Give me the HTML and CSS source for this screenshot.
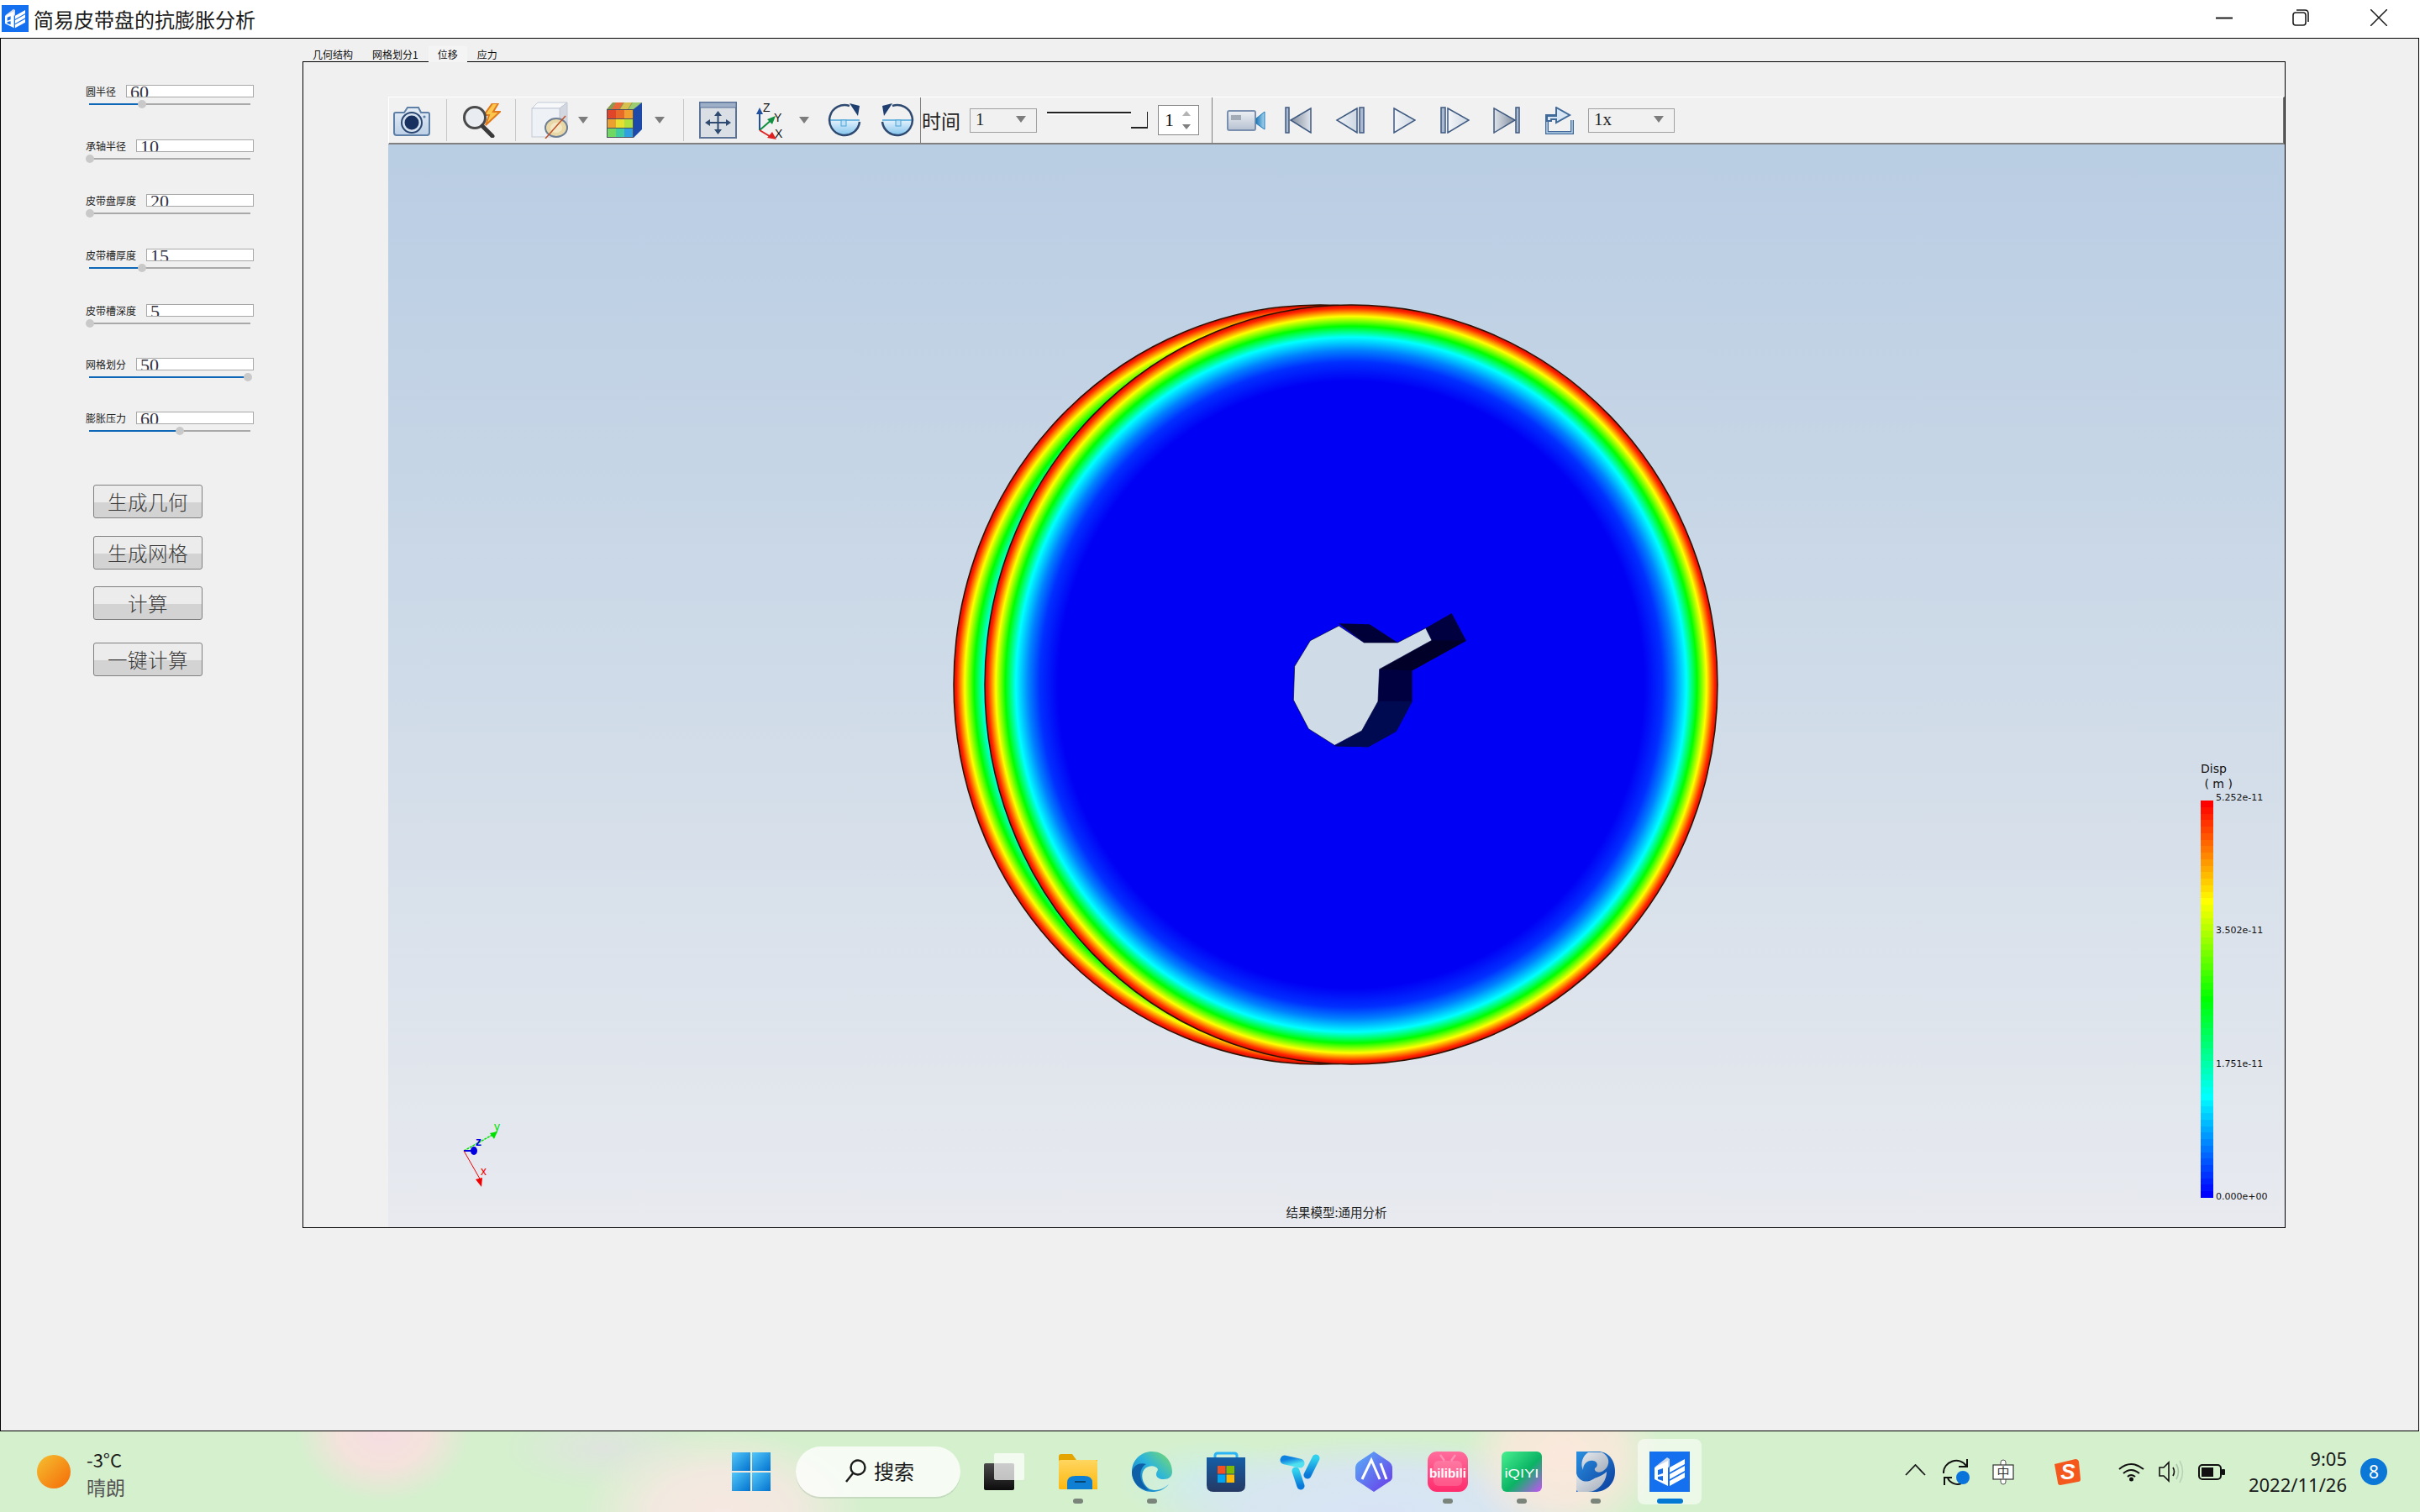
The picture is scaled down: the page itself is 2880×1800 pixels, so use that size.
FILE: index.html
```html
<!DOCTYPE html>
<html lang="zh">
<head>
<meta charset="utf-8">
<title>简易皮带盘的抗膨胀分析</title>
<link rel="stylesheet" href="styles.css">
</head>
<body>
<svg class="defs" width="0" height="0" aria-hidden="true">
  <defs>
    <radialGradient id="disc">
      <stop offset="0" stop-color="#0000f5"/><stop offset=".80" stop-color="#0000f5"/>
      <stop offset=".85" stop-color="#0030ff"/><stop offset=".88" stop-color="#0080ff"/>
      <stop offset=".915" stop-color="#00ffff"/><stop offset=".944" stop-color="#00ff00"/>
      <stop offset=".97" stop-color="#ffff00"/><stop offset=".992" stop-color="#ff2000"/><stop offset="1" stop-color="#d01000"/>
    </radialGradient>
    <linearGradient id="camBody" x1="0" y1="0" x2="0" y2="1"><stop offset="0" stop-color="#e6eef7"/><stop offset="1" stop-color="#bcd0e6"/></linearGradient>
    <linearGradient id="steel" x1="0" y1="0" x2="0" y2="1"><stop offset="0" stop-color="#eef1f5"/><stop offset="1" stop-color="#b5c0d0"/></linearGradient>
    <linearGradient id="darkTri" x1="1" y1="0" x2="0" y2="0"><stop offset="0" stop-color="#7f8b9d"/><stop offset="1" stop-color="#dfe4ea"/></linearGradient>
    <linearGradient id="darkTriR" x1="0" y1="0" x2="1" y2="0"><stop offset="0" stop-color="#7f8b9d"/><stop offset="1" stop-color="#dfe4ea"/></linearGradient>
    <linearGradient id="lightTri" x1="0" y1="0" x2="1" y2="0"><stop offset="0" stop-color="#f4f6f9"/><stop offset="1" stop-color="#ccd6e2"/></linearGradient>
    <linearGradient id="chord" x1="0" y1="0" x2="0" y2="1"><stop offset="0" stop-color="#e4f2fb"/><stop offset="1" stop-color="#82c4ee"/></linearGradient>
    <linearGradient id="lensBlue" x1="0" y1="0" x2="1" y2="0"><stop offset="0" stop-color="#1f78b8"/><stop offset="1" stop-color="#a8d8f0"/></linearGradient>
    <linearGradient id="pane" x1="0" y1="0" x2="1" y2="1"><stop offset="0" stop-color="#52c8fa"/><stop offset="1" stop-color="#0272cf"/></linearGradient>
    <linearGradient id="sun" x1="0" y1="0" x2="1" y2="1"><stop offset="0" stop-color="#f5c030"/><stop offset="1" stop-color="#f56a08"/></linearGradient>
    <linearGradient id="dark" x1="0" y1="0" x2="0" y2="1"><stop offset="0" stop-color="#4a4a4a"/><stop offset="1" stop-color="#0c0c0c"/></linearGradient>
    <linearGradient id="folder" x1="0" y1="0" x2="0" y2="1"><stop offset="0" stop-color="#ffd660"/><stop offset="1" stop-color="#fdb810"/></linearGradient>
    <linearGradient id="edge" x1="0" y1="1" x2="1" y2="0"><stop offset="0" stop-color="#0f6cc0"/><stop offset=".55" stop-color="#2cb5dc"/><stop offset="1" stop-color="#7edc62"/></linearGradient>
    <linearGradient id="bag" x1="0" y1="0" x2="0" y2="1"><stop offset="0" stop-color="#155ea6"/><stop offset="1" stop-color="#253963"/></linearGradient>
    <linearGradient id="vapp" x1="0" y1="0" x2="1" y2="1"><stop offset="0" stop-color="#0f82e0"/><stop offset="1" stop-color="#50e0f0"/></linearGradient>
    <linearGradient id="vapp2" x1="0" y1="0" x2="0" y2="1"><stop offset="0" stop-color="#30d0ee"/><stop offset="1" stop-color="#0a78d8"/></linearGradient>
    <linearGradient id="hex" x1="0" y1="0" x2="1" y2="1"><stop offset="0" stop-color="#58b0f8"/><stop offset="1" stop-color="#6a38e8"/></linearGradient>
    <linearGradient id="bili" x1="0" y1="0" x2="0" y2="1"><stop offset="0" stop-color="#ff6d9c"/><stop offset="1" stop-color="#ff2c6c"/></linearGradient>
    <linearGradient id="iqiyi" x1="0" y1="0" x2="1" y2="1"><stop offset="0" stop-color="#48f090"/><stop offset=".55" stop-color="#0ab464"/><stop offset="1" stop-color="#c850f8"/></linearGradient>
    <linearGradient id="swirl" x1="0" y1="0" x2="1" y2="1"><stop offset="0" stop-color="#e6e9ee"/><stop offset="1" stop-color="#a2adba"/></linearGradient>
    <linearGradient id="swirlB" x1="0" y1="0" x2="1" y2="1"><stop offset="0" stop-color="#2a90e0"/><stop offset="1" stop-color="#0a3c9c"/></linearGradient>
    <symbol id="appIcon" viewBox="0 0 48 48">
      <rect width="48" height="48" fill="#1570ef"/>
      <path d="M7 18 L21 7 L24 9 V17 L23 19Z" fill="#cdd9ea"/>
      <path d="M6 19 L22 11 V41 L6 33Z" fill="#fff"/>
      <path d="M10 22 l6 -2 v6 l-6 2z M10 30 l6 -1 v6 l-6 -2z" fill="#1570ef"/>
      <path d="M24 19 L42 9 V15 L24 25Z M24 27 L42 17 V23 L24 33Z M24 35 L42 25 V31 L24 41Z" fill="#fff"/>
    </symbol>
  </defs>
</svg>

<header class="titlebar">
  <svg class="app-icon" width="32" height="32"><use href="#appIcon"/></svg>
  <span class="app-title">简易皮带盘的抗膨胀分析</span>
  <div class="win-controls">
    <svg class="wc-min" width="20" height="3" viewBox="0 0 20 3"><path d="M0 1.5H20" stroke="#1c1c1c" stroke-width="2"/></svg>
    <svg class="wc-max" width="20" height="20" viewBox="0 0 20 20" fill="none" stroke="#1c1c1c" stroke-width="1.6"><rect x="1" y="4" width="15" height="15" rx="3"/><path d="M5 1H15Q19 1 19 5V15"/></svg>
    <svg class="wc-close" width="20" height="20" viewBox="0 0 20 20"><path d="M0 0L20 20M20 0L0 20" stroke="#1c1c1c" stroke-width="1.5"/></svg>
  </div>
</header>

<main class="window">
  <aside class="sidebar">
    <div class="param">
      <div class="param-head"><label>圆半径</label><div class="num">60</div></div>
      <div class="track"><i class="fill" style="width:63px"></i><b class="thumb" style="left:63px"></b></div>
    </div>
    <div class="param">
      <div class="param-head"><label>承轴半径</label><div class="num">10</div></div>
      <div class="track"><b class="thumb" style="left:1px"></b></div>
    </div>
    <div class="param">
      <div class="param-head"><label>皮带盘厚度</label><div class="num">20</div></div>
      <div class="track"><b class="thumb" style="left:1px"></b></div>
    </div>
    <div class="param">
      <div class="param-head"><label>皮带槽厚度</label><div class="num">15</div></div>
      <div class="track"><i class="fill" style="width:63px"></i><b class="thumb" style="left:63px"></b></div>
    </div>
    <div class="param nudge-down">
      <div class="param-head"><label>皮带槽深度</label><div class="num">5</div></div>
      <div class="track"><b class="thumb" style="left:1px"></b></div>
    </div>
    <div class="param nudge-up">
      <div class="param-head"><label>网格划分</label><div class="num">50</div></div>
      <div class="track"><i class="fill" style="width:189px"></i><b class="thumb" style="left:189px"></b></div>
    </div>
    <div class="param nudge-up">
      <div class="param-head"><label>膨胀压力</label><div class="num">60</div></div>
      <div class="track"><i class="fill" style="width:108px"></i><b class="thumb" style="left:108px"></b></div>
    </div>
    <div class="actions">
      <button class="btn">生成几何</button>
      <button class="btn btn-2">生成网格</button>
      <button class="btn btn-3">计算</button>
      <button class="btn btn-4">一键计算</button>
    </div>
  </aside>

  <section class="main">
    <nav class="tabs">
      <span class="tab">几何结构</span>
      <span class="tab">网格划分1</span>
      <span class="tab tab-active">位移</span>
      <span class="tab">应力</span>
    </nav>
    <div class="panel">
      <div class="toolbar">
        <svg class="t-cam" width="44" height="37" viewBox="0 0 44 37"><path d="M3 9H13L17 3H30L33 9H41Q43 9 43 11V33Q43 36 40 36H4Q1 36 1 33V11Q1 9 3 9Z" fill="url(#camBody)" stroke="#5e7fa6" stroke-width="2"/><circle cx="22" cy="21" r="12" fill="#d8e3f0" stroke="#2a4673" stroke-width="2"/><circle cx="22" cy="21" r="8.5" fill="#17305f"/><circle cx="37" cy="14" r="1.6" fill="#5e7fa6"/></svg>
        <i class="sep s-1"></i>
        <svg class="t-mag" width="47" height="41" viewBox="0 0 47 41"><path d="M37 0L27 14H33L29 26L46 10H38L44 0Z" fill="#fbc64e" stroke="#e07a1c" stroke-width="2"/><circle cx="16" cy="17" r="12.5" fill="#e9edf1" stroke="#4a4a4a" stroke-width="3"/><path d="M25 27L37 39" stroke="#3a3a3a" stroke-width="5" stroke-linecap="round"/></svg>
        <i class="sep s-2"></i>
        <svg class="t-box" width="45" height="44" viewBox="0 0 45 44"><path d="M1 8L8 1H43L34 8Z" fill="#f7f8fa" stroke="#c3cad6"/><path d="M34 8L43 1V34L34 42Z" fill="#d3d8e0" stroke="#c3cad6"/><rect x="1" y="8" width="33" height="34" fill="#eef1f5" stroke="#c3cad6"/><ellipse cx="30" cy="31" rx="13" ry="11" fill="#e8d8a8" stroke="#6e7e94" stroke-width="2"/><ellipse cx="30" cy="31" rx="7" ry="6" fill="#f3e8c6"/><path d="M17 44L41 17" stroke="#c0502a" stroke-width="1.5"/></svg>
        <svg class="t-arrow a-1" width="12" height="8" viewBox="0 0 12 8"><path d="M0 0H12L6 8Z" fill="#7c7c7c"/></svg>
        <svg class="t-cube" width="44" height="44" viewBox="0 0 44 44"><path d="M1 9L8 1H43L33 9Z" fill="#8a9a50"/><path d="M12 1H21L16 9H7Z" fill="#e86a3a"/><path d="M22 1H31L26 9H17Z" fill="#d8c050"/><path d="M32 1H42L33 9H27Z" fill="#9ccc70"/><path d="M33 9L43 1V33L33 43Z" fill="#1d4aa8"/><path d="M1 9H33V43H1Z" fill="#4a5060"/><rect x="2" y="10" width="10" height="10" fill="#e0452a"/><rect x="12" y="10" width="10" height="10" fill="#e86a28"/><rect x="22" y="10" width="10" height="10" fill="#f0a030"/><rect x="2" y="21" width="10" height="10" fill="#eca030"/><rect x="12" y="21" width="10" height="10" fill="#e8e030"/><rect x="22" y="21" width="10" height="10" fill="#b0e040"/><rect x="2" y="32" width="10" height="10" fill="#70d860"/><rect x="12" y="32" width="10" height="10" fill="#40cca0"/><rect x="22" y="32" width="10" height="10" fill="#30a0e0"/></svg>
        <svg class="t-arrow a-2" width="12" height="8" viewBox="0 0 12 8"><path d="M0 0H12L6 8Z" fill="#7c7c7c"/></svg>
        <i class="sep s-3"></i>
        <svg class="t-fit" width="45" height="44" viewBox="0 0 45 44"><rect x="1" y="1" width="43" height="42" fill="#dadee5" stroke="#5a7397" stroke-width="2"/><rect x="1" y="1" width="43" height="6" fill="#9db0c8" stroke="#5a7397"/><path d="M22.5 15V35M11 25H34" stroke="#2f4a70" stroke-width="2"/><path d="M22.5 11L18 17H27ZM22.5 39L18 33H27ZM7 25L13 21V29ZM38 25L32 21V29Z" fill="#2f4a70"/></svg>
        <svg class="t-triad" width="35" height="45" viewBox="0 0 35 45"><path d="M4 34V12" stroke="#2050a0" stroke-width="2"/><path d="M4 7L0 15H8Z" fill="#2050a0"/><path d="M4 34L19 21" stroke="#109040" stroke-width="2"/><path d="M23 17L13 21L19 27Z" fill="#109040"/><path d="M4 34L19 43" stroke="#e02020" stroke-width="2"/><path d="M24 45L13 43L19 36Z" fill="#e02020"/><text x="8" y="12" class="triad-label">Z</text><text x="21" y="24" class="triad-label">Y</text><text x="22" y="43" class="triad-label">X</text></svg>
        <svg class="t-arrow a-3" width="12" height="8" viewBox="0 0 12 8"><path d="M0 0H12L6 8Z" fill="#7c7c7c"/></svg>
        <svg class="t-rot1" width="41" height="40" viewBox="0 0 41 40"><path d="M2 20H38A18 18 0 0 1 2 20Z" fill="url(#chord)"/><path d="M2 20H38" stroke="#4aa3d8" stroke-width="1.5"/><rect x="16" y="20" width="6" height="7" fill="#bfe0f5" stroke="#4aa3d8"/><path d="M26 3A18 18 0 1 0 38 22" fill="none" stroke="#2f4a70" stroke-width="2.5"/><path d="M26 0L38 3L36 15Z" fill="#1f3f70"/></svg>
        <svg class="t-rot2" width="40" height="40" viewBox="0 0 40 40"><g transform="translate(40,0) scale(-1,1)"><path d="M2 20H38A18 18 0 0 1 2 20Z" fill="url(#chord)"/><path d="M2 20H38" stroke="#4aa3d8" stroke-width="1.5"/><rect x="16" y="20" width="6" height="7" fill="#bfe0f5" stroke="#4aa3d8"/><path d="M26 3A18 18 0 1 0 38 22" fill="none" stroke="#2f4a70" stroke-width="2.5"/><path d="M26 0L38 3L36 15Z" fill="#1f3f70"/></g></svg>
        <i class="sep sep-full s-4"></i>
        <span class="t-time">时间</span>
        <div class="combo c-time"><span>1</span><svg width="12" height="8" viewBox="0 0 12 8"><path d="M0 0H12L6 8Z" fill="#7c7c7c"/></svg></div>
        <svg class="t-slider" width="120" height="24" viewBox="0 0 120 24"><path d="M0 3H100" stroke="#222" stroke-width="2"/><path d="M0 5H100" stroke="#fff" stroke-width="2"/><path d="M100 21H120V2" fill="none" stroke="#222" stroke-width="2"/></svg>
        <div class="spin"><span>1</span><svg width="10" height="22" viewBox="0 0 10 22"><path d="M5 0L10 6H0Z" fill="#b4b4b4"/><path d="M0 16H10L5 22Z" fill="#808080"/></svg></div>
        <i class="sep sep-full s-5"></i>
        <svg class="t-video" width="46" height="25" viewBox="0 0 46 25"><rect x="1" y="1" width="33" height="23" rx="2" fill="url(#steel)" stroke="#7b8fae" stroke-width="2"/><rect x="5" y="6" width="12" height="6" fill="#a3abb7"/><path d="M35 10L45 2V23L35 16Z" fill="url(#lensBlue)" stroke="#1f78b8"/></svg>
        <svg class="t-first" width="32" height="32" viewBox="0 0 32 32"><rect x="1" y="1" width="4" height="30" fill="#a9b9cf" stroke="#3f5a80" stroke-width="1.5"/><path d="M31 2L7 16L31 31Z" fill="url(#darkTriR)" stroke="#3f5a80" stroke-width="1.5"/></svg>
        <svg class="t-prev" width="36" height="32" viewBox="0 0 36 32"><path d="M26 2L2 16L26 31Z" fill="url(#lightTri)" stroke="#3f5a80" stroke-width="1.5"/><rect x="29" y="1" width="5" height="30" fill="#a9b9cf" stroke="#3f5a80" stroke-width="1.5"/></svg>
        <svg class="t-play" width="27" height="32" viewBox="0 0 27 32"><path d="M1 2L26 16L1 31Z" fill="url(#lightTri)" stroke="#3f5a80" stroke-width="1.5"/></svg>
        <svg class="t-next" width="35" height="32" viewBox="0 0 35 32"><rect x="1" y="1" width="5" height="30" fill="#a9b9cf" stroke="#3f5a80" stroke-width="1.5"/><path d="M9 2L34 16L9 31Z" fill="url(#lightTri)" stroke="#3f5a80" stroke-width="1.5"/></svg>
        <svg class="t-last" width="33" height="32" viewBox="0 0 33 32"><path d="M1 2L26 16L1 31Z" fill="url(#darkTri)" stroke="#3f5a80" stroke-width="1.5"/><rect x="27" y="1" width="4" height="30" fill="#a9b9cf" stroke="#3f5a80" stroke-width="1.5"/></svg>
        <svg class="t-export" width="36" height="33" viewBox="0 0 36 33"><path d="M13 11H3V31H33V16" fill="none" stroke="#3f6a9a" stroke-width="4"/><path d="M13 11H3V31H33V16" fill="none" stroke="#bcd4ec" stroke-width="1.5"/><path d="M3 17V11H14V7L14 1L30 10L14 19V15H8V17Z" fill="#d8e6f4" stroke="#3f6a9a" stroke-width="2"/></svg>
        <div class="combo c-speed"><span>1x</span><svg width="12" height="8" viewBox="0 0 12 8"><path d="M0 0H12L6 8Z" fill="#7c7c7c"/></svg></div>
      </div>

      <div class="viewport">
        <svg class="scene" width="2256" height="1289" viewBox="462 172 2256 1289">
          <ellipse cx="1571" cy="815" rx="436" ry="452" fill="url(#disc)" stroke="#301000" stroke-width="1.5"/>
          <ellipse cx="1608" cy="815" rx="436" ry="452" fill="url(#disc)" stroke="#301000" stroke-width="1.5"/>
          <g transform="translate(1480,680) scale(.3333)">
            <path d="M340 187L450 190L550 255H430Z" fill="#000038"/>
            <path d="M650 203L743 150L795 248L602 355V465L545 572L445 628L325 625L422 570L480 465L485 350L672 247Z" fill="#000040"/>
            <path d="M485 350L672 247L795 248L602 355Z" fill="#000028"/>
            <path d="M480 465L602 465L545 572L445 628L325 625L422 570Z" fill="#000a50"/>
            <path d="M340 195L430 255H550L650 203L672 247L485 350L480 465L422 570L325 622L232 563L178 460L182 340L238 248Z" fill="#cfdce8" stroke="#000030" stroke-width="2"/>
          </g>
          <g class="triad">
            <path d="M552 1370L588 1350" stroke="#00e000" stroke-width="1.5" stroke-dasharray="3 1"/>
            <path d="M592 1347L583 1349L588 1356Z" fill="#00e000"/>
            <text x="588" y="1346" class="axis axis-y">y</text>
            <path d="M552 1370H562" stroke="#0000e0" stroke-width="2"/>
            <ellipse cx="564" cy="1370" rx="4" ry="5" fill="#0000e0"/>
            <text x="566" y="1364" class="axis axis-z">z</text>
            <path d="M552 1370L572 1405" stroke="#f00000"/>
            <path d="M573 1413L566 1404L574 1402Z" fill="#f00000"/>
            <text x="572" y="1399" class="axis axis-x">x</text>
          </g>
        </svg>
        <div class="legend">
          <div class="legend-title">Disp<br>&nbsp;( m )</div>
          <div class="legend-body">
            <div class="legend-bar"></div>
            <div class="legend-labels"><span>5.252e-11</span><span>3.502e-11</span><span>1.751e-11</span><span>0.000e+00</span></div>
          </div>
        </div>
        <div class="caption">结果模型:通用分析</div>
      </div>
    </div>
  </section>
</main>

<footer class="taskbar">
  <div class="weather">
    <svg width="40" height="40" viewBox="0 0 40 40"><circle cx="20" cy="20" r="20" fill="url(#sun)"/></svg>
    <div class="weather-text"><span>-3°C</span><span class="weather-sub">晴朗</span></div>
  </div>
  <div class="cell">
    <svg width="46" height="46" viewBox="0 0 46 46"><rect width="22" height="22" fill="url(#pane)"/><rect x="24" width="22" height="22" fill="url(#pane)"/><rect y="24" width="22" height="22" fill="url(#pane)"/><rect x="24" y="24" width="22" height="22" fill="url(#pane)"/></svg>
  </div>
  <div class="search">
    <svg width="28" height="28" viewBox="0 0 28 28" fill="none" stroke="#1a1a1a" stroke-width="2.4"><circle cx="17" cy="10" r="8.5"/><path d="M11 17L3 27"/></svg>
    <span>搜索</span>
  </div>
  <div class="cell cell-first">
    <svg width="48" height="44" viewBox="0 0 48 44"><rect y="12" width="36" height="32" rx="2" fill="url(#dark)"/><rect x="12" width="36" height="32" rx="2" fill="#fff" fill-opacity=".72"/></svg>
  </div>
  <div class="cell run">
    <svg width="46" height="42" viewBox="0 0 46 42"><path d="M0 3Q0 0 3 0H16L21 7H46V42H3Q0 42 0 39Z" fill="#e5a500"/><rect y="7" width="46" height="35" rx="2" fill="url(#folder)"/><path d="M10 42V34Q10 26 20 26H30Q40 26 40 34V42Z" fill="#0e7fd2"/><rect x="19" y="32" width="13" height="2" fill="#06456f"/></svg>
  </div>
  <div class="cell run">
    <svg width="48" height="48" viewBox="0 0 48 48"><path d="M24 48C10 48 0 37 0 24C0 10 11 0 24 0C38 0 48 11 48 24C48 30 44 33 38 33C33 33 29 31 29 27C29 24 31 23 31 21C28 16 20 16 15 21C10 27 12 38 20 44C28 48 36 46 44 39C38 46 31 48 24 48Z" fill="url(#edge)"/><path d="M0 24C3 15 10 13 17 15C8 20 7 35 20 46C8 45 0 35 0 24Z" fill="#0f5ea8"/></svg>
  </div>
  <div class="cell">
    <svg width="46" height="48" viewBox="0 0 46 48"><path d="M10 12V5Q10 2 13 2H33Q36 2 36 5V12" fill="none" stroke="#28b4f5" stroke-width="3"/><path d="M0 7H46V40Q46 48 38 48H8Q0 48 0 40Z" fill="url(#bag)"/><rect x="13" y="17" width="9.500" height="9.500" fill="#f25022"/><rect x="23.500" y="17" width="9.500" height="9.500" fill="#7fba00"/><rect x="13" y="27.500" width="9.500" height="9.500" fill="#00a4ef"/><rect x="23.500" y="27.500" width="9.500" height="9.500" fill="#ffb900"/></svg>
  </div>
  <div class="cell">
    <svg width="48" height="44" viewBox="0 0 48 44"><path d="M6 8L24 12" stroke="url(#vapp)" stroke-width="11" stroke-linecap="round"/><path d="M43 6L33 26" stroke="url(#vapp2)" stroke-width="9" stroke-linecap="round"/><path d="M19 21L25 39" stroke="url(#vapp2)" stroke-width="9" stroke-linecap="round"/></svg>
  </div>
  <div class="cell">
    <svg width="44" height="48" viewBox="0 0 44 48"><path d="M22 0L40 12Q44 15 44 20V30Q44 34 40 36L22 48L4 36Q0 34 0 30V20Q0 15 4 12Z" fill="url(#hex)"/><path d="M8 33L19 10L29 33M30 14L37 33" fill="none" stroke="#fff" stroke-width="3"/></svg>
  </div>
  <div class="cell run">
    <svg width="48" height="48" viewBox="0 0 48 48"><rect width="48" height="48" rx="11" fill="url(#bili)"/><path d="M15 4L20 11M33 4L28 11" stroke="#ff8fb4" stroke-width="2.500"/><rect x="7" y="11" width="34" height="30" rx="6" fill="#fff" fill-opacity=".16"/><text x="24" y="31" class="ico-text bili-text" textLength="44" lengthAdjust="spacingAndGlyphs">bilibili</text></svg>
  </div>
  <div class="cell run">
    <svg width="48" height="48" viewBox="0 0 48 48"><rect width="48" height="48" rx="6" fill="url(#iqiyi)"/><text x="24" y="31" class="ico-text iqiyi-text" textLength="41" lengthAdjust="spacingAndGlyphs">iQIYI</text></svg>
  </div>
  <div class="cell run">
    <svg width="46" height="48" viewBox="0 0 46 48"><path d="M0 0H26C38 0 46 10 46 24C46 38 36 48 22 48H0Z" fill="url(#swirlB)"/><path d="M14 1H30C42 6 40 20 30 24C25 26 21 23 22 20C26 18 26 12 20 11C14 10 8 14 8 22C4 14 8 5 14 1Z" fill="url(#swirl)"/><path d="M0 26C2 34 10 38 18 34C24 30 30 30 36 24C36 36 26 48 14 48H2L0 46Z" fill="url(#swirl)"/></svg>
  </div>
  <div class="cell cell-active">
    <svg width="48" height="48"><use href="#appIcon"/></svg>
  </div>
  <div class="tray">
    <svg class="tr-chev" width="25" height="14" viewBox="0 0 25 14"><path d="M1 13L12.500 1L24 13" fill="none" stroke="#1a1a1a" stroke-width="1.8"/></svg>
    <svg class="tr-sync" width="32" height="32" viewBox="0 0 32 32" fill="none" stroke="#111" stroke-width="2"><path d="M1 18C0 4 20 -3 28 9"/><path d="M29 1V10H19"/><path d="M6 24C10 31 18 32 22 30"/><path d="M2 32V23H11"/><circle cx="24" cy="23" r="8" fill="#0a74da" stroke="none"/></svg>
    <svg class="tr-ime" width="26" height="31" viewBox="0 0 26 31"><rect x="10" y="1" width="6" height="29" rx="3" fill="#fff" stroke="#555"/><rect x="1" y="7" width="24" height="17" fill="#fff" stroke="#333" stroke-width="1.200"/><text x="13" y="21" class="ime-text">中</text></svg>
    <svg class="tr-sogou" width="32" height="31" viewBox="0 0 32 31"><path d="M1 6L26 0Q29 0 30 3L32 24Q32 27 29 27L8 31Q5 31 5 28Z" fill="#f4581c"/><text x="17" y="24" class="sogou-text">S</text></svg>
    <svg class="tr-wifi" width="31" height="24" viewBox="0 0 31 24" fill="none" stroke="#111" stroke-width="2"><path d="M1 9Q15 -3 30 9"/><path d="M6 14Q15 6 25 14"/><path d="M11 18Q15 14 20 18"/><circle cx="15.500" cy="21" r="2.500" fill="#111" stroke="none"/></svg>
    <svg class="tr-vol" width="30" height="28" viewBox="0 0 30 28" fill="none" stroke="#111" stroke-width="1.600"><path d="M1 9H6L12 3V25L6 19H1Z"/><path d="M17 9Q20 14 17 19"/><path d="M21 5Q26 14 21 23" stroke="#a9c4a8"/><path d="M25 1Q32 14 25 27" stroke="#b9d3b6"/></svg>
    <svg class="tr-bat" width="32" height="19" viewBox="0 0 32 19"><rect x="1" y="1" width="26" height="17" rx="4" fill="none" stroke="#111" stroke-width="2"/><rect x="4" y="4" width="14" height="11" fill="#111"/><rect x="28" y="6" width="4" height="7" rx="1" fill="#111"/></svg>
    <div class="clock"><span>9:05</span><span>2022/11/26</span></div>
    <div class="badge">8</div>
  </div>
</footer>
</body>
</html>
```
FILE: styles.css
```css
* { box-sizing: border-box; }
html, body { margin: 0; padding: 0; }
body {
  width: 2880px;
  height: 1800px;
  overflow: hidden;
  background: #fff;
  display: flex;
  flex-direction: column;
  font-family: "Noto Sans CJK SC", "Noto Sans", sans-serif;
  color: #111;
}
.defs { position: absolute; }
svg { display: block; flex: none; }

/* title bar */
.titlebar { height: 45px; flex: none; display: flex; align-items: center; padding: 0 0 3px 2px; }
.app-icon { margin-top: 1px; }
.app-title { margin-left: 6px; padding-top: 4px; font-size: 24px; line-height: 32px; color: #1a1a1a; white-space: nowrap; }
.win-controls { margin-left: auto; display: flex; align-items: center; padding-right: 39px; }
.wc-max { margin-left: 71px; }
.wc-close { margin-left: 73px; }

/* window */
.window {
  width: 2879px;
  height: 1659px;
  flex: none;
  border: 1px solid #000;
  background: #f0f0f0;
  display: flex;
}
.sidebar { width: 359px; flex: none; padding: 55px 0 0 101px; }
.param { width: 200px; height: 65px; display: flex; flex-direction: column; }
.nudge-down { margin-top: 1px; }
.nudge-up { margin-top: -1px; }
.param-head { display: flex; align-items: center; gap: 12px; height: 15px; }
.param-head label { font-size: 12px; line-height: 15px; color: #222; white-space: nowrap; }
.num {
  flex: 1;
  height: 15px;
  background: #fff;
  border: 1px solid #a8a8a8;
  overflow: hidden;
  padding-left: 4px;
  font-family: "Liberation Serif", serif;
  font-size: 22px;
  line-height: 15px;
  color: #334;
}
.track { position: relative; width: 192px; height: 2px; margin: 7px 0 0 4px; background: #a9a9a9; }
.fill { display: block; height: 2px; background: #0f67b8; }
.thumb {
  position: absolute;
  top: -4px;
  width: 10px;
  height: 10px;
  margin-left: -5px;
  border-radius: 50%;
  background: #c9c9c9;
}
.actions { display: flex; flex-direction: column; align-items: flex-start; margin: 22px 0 0 9px; }
.btn {
  width: 130px;
  height: 40px;
  padding: 0;
  border: 1px solid #808080;
  border-radius: 3px;
  background: linear-gradient(#ececec 0 52%, #d3d3d3 52% 100%);
  font-family: "Noto Sans CJK SC", sans-serif;
  font-weight: 300;
  font-size: 23.500px;
  line-height: 36px;
  color: #3a3a3a;
  letter-spacing: .5px;
}
.btn-2 { margin-top: 21px; }
.btn-3 { margin-top: 20px; }
.btn-4 { margin-top: 27px; }

/* tabs and panel */
.main { flex: none; width: 2360px; padding-top: 9px; display: flex; flex-direction: column; }
.tabs { display: flex; gap: 1px; height: 18px; padding-left: 1px; flex: none; position: relative; z-index: 1; }
.tab { padding: 0 11px; font-size: 12px; line-height: 20px; color: #111; white-space: nowrap; }
.tab-active { height: 19px; background: #f4f4f4; }
.panel {
  width: 2360px;
  height: 1389px;
  flex: none;
  border: 1px solid #000;
  padding: 41px 0 0 101px;
  display: flex;
  flex-direction: column;
}
.toolbar {
  height: 57px;
  flex: none;
  background: #f1f1f1;
  border-top: 1px solid #fff;
  border-left: 1px solid #fff;
  border-bottom: 2px solid #808080;
  border-right: 2px solid #707070;
  display: flex;
  align-items: center;
}
.t-cam { margin-left: 5px; }
.sep { width: 1px; height: 50px; background: #c8c8c8; flex: none; }
.sep-full { height: 54px; background: #808080; }
.s-1 { margin-left: 19px; }
.t-mag { margin-left: 17px; }
.s-2 { margin-left: 17px; }
.t-box { margin-left: 18px; }
.a-1 { margin-left: 11px; }
.t-cube { margin-left: 21px; }
.a-2 { margin-left: 14px; }
.s-3 { margin-left: 22px; }
.t-fit { margin-left: 18px; }
.t-triad { margin-left: 23px; }
.triad-label { font-family: "Liberation Sans", sans-serif; font-size: 14px; fill: #111; }
.a-3 { margin-left: 16px; }
.t-rot1 { margin-left: 22px; }
.t-rot2 { margin-left: 22px; }
.s-4 { margin-left: 7px; }
.t-time { margin-left: 1px; width: 46px; font-size: 23px; line-height: 30px; color: #222; white-space: nowrap; }
.combo {
  height: 29px;
  border: 1px solid #a0a0a0;
  display: flex;
  align-items: center;
  justify-content: space-between;
  padding: 0 12px 2px 6px;
  font-family: "Liberation Serif", serif;
  font-size: 21px;
  color: #222;
}
.c-time { width: 80px; margin-left: 11px; }
.t-slider { margin-left: 12px; }
.spin {
  width: 49px;
  height: 36px;
  margin-left: 12px;
  background: #fff;
  border: 1px solid #888;
  display: flex;
  align-items: center;
  justify-content: space-between;
  padding: 0 9px 0 7px;
  font-family: "Liberation Serif", serif;
  font-size: 22px;
}
.s-5 { margin-left: 15px; }
.t-video { margin-left: 17px; }
.t-first { margin-left: 23px; }
.t-prev { margin-left: 28px; }
.t-play { margin-left: 33px; }
.t-next { margin-left: 29px; }
.t-last { margin-left: 28px; }
.t-export { margin-left: 28px; }
.c-speed { width: 103px; margin-left: 16px; }

/* 3D viewport */
.viewport {
  position: relative;
  flex: 1;
  overflow: hidden;
  background: linear-gradient(#b9cde3 0%, #cfdbe8 50%, #e8eaef 100%);
}
.scene { position: absolute; left: 0; top: 0; }
.axis { font-family: "Liberation Sans", sans-serif; font-size: 14px; }
.axis-y { fill: #00e000; }
.axis-z { fill: #0000e0; font-weight: 700; }
.axis-x { fill: #f00000; }
.legend { position: absolute; left: 2157px; top: 734px; font-family: "DejaVu Sans", sans-serif; color: #111; }
.legend-title { font-size: 14px; line-height: 18px; height: 47px; }
.legend-body { display: flex; gap: 3px; }
.legend-bar {
  width: 15px;
  height: 61em;
  font-size: 7.754px;
  background: linear-gradient(#f00 1em,#f10 0 2em,#f20 0 3em,#f30 0 4em,#f40 0 5em,#f50 0 6em,#f60 0 7em,#f70 0 8em,#f80 0 9em,#f90 0 10em,#fa0 0 11em,#fb0 0 12em,#fc0 0 13em,#fd0 0 14em,#fe0 0 15em,#ff0 0 16em,#ef0 0 17em,#df0 0 18em,#cf0 0 19em,#bf0 0 20em,#af0 0 21em,#9f0 0 22em,#8f0 0 23em,#7f0 0 24em,#6f0 0 25em,#5f0 0 26em,#4f0 0 27em,#3f0 0 28em,#2f0 0 29em,#1f0 0 30em,#0f0 0 31em,#0f1 0 32em,#0f2 0 33em,#0f3 0 34em,#0f4 0 35em,#0f5 0 36em,#0f6 0 37em,#0f7 0 38em,#0f8 0 39em,#0f9 0 40em,#0fa 0 41em,#0fb 0 42em,#0fc 0 43em,#0fd 0 44em,#0fe 0 45em,#0ff 0 46em,#0ef 0 47em,#0df 0 48em,#0cf 0 49em,#0bf 0 50em,#0af 0 51em,#09f 0 52em,#08f 0 53em,#07f 0 54em,#06f 0 55em,#05f 0 56em,#04f 0 57em,#03f 0 58em,#02f 0 59em,#01f 0 60em,#00f 0 61em);
}
.legend-labels {
  height: 489px;
  margin-top: -10px;
  display: flex;
  flex-direction: column;
  justify-content: space-between;
  font-size: 11px;
  line-height: 14px;
  white-space: nowrap;
}
.caption { position: absolute; left: 0; right: 0; bottom: 9px; text-align: center; font-size: 14.500px; line-height: 18px; color: #222; }

/* taskbar */
.taskbar {
  height: 96px;
  flex: none;
  display: flex;
  align-items: center;
  background:
    radial-gradient(ellipse 105px 85px at 456px 0, #f6dde2 0, #f4e2dc 50%, rgba(245,230,210,0) 100%),
    radial-gradient(ellipse 170px 100px at 860px 96px, #f6e8e2 0, rgba(246,232,226,.85) 50%, rgba(246,232,226,0) 100%),
    radial-gradient(ellipse 120px 50px at 720px 20px, #dfe4de 0, rgba(223,228,222,0) 100%),
    radial-gradient(ellipse 120px 100px at 1860px 30px, #fbe8dc 0, rgba(251,232,220,.8) 55%, rgba(251,232,220,0) 100%),
    radial-gradient(ellipse 280px 90px at 1640px 96px, #d8e4f6 0, rgba(216,228,246,.85) 55%, rgba(216,228,246,0) 100%),
    radial-gradient(ellipse 110px 50px at 1440px 60px, #cdeeea 0, rgba(205,238,234,0) 100%),
    #d4f0cd;
}
.weather { width: 850px; flex: none; padding-left: 44px; display: flex; align-items: center; gap: 19px; }
.weather-text { display: flex; flex-direction: column; font-size: 22px; line-height: 33px; color: #1a1a1a; padding-top: 3px; }
.weather-sub { font-size: 23px; color: #555; }
.cell { position: relative; width: 88px; height: 96px; flex: none; display: flex; align-items: center; justify-content: center; }
.cell-first { margin-left: 8px; }
.run::after {
  content: "";
  position: absolute;
  left: 38px;
  top: 80px;
  width: 12px;
  height: 6px;
  border-radius: 3px;
  background: #7b847b;
}
.cell-active svg { position: relative; }
.cell-active::before {
  content: "";
  position: absolute;
  left: 6px;
  top: 9px;
  width: 76px;
  height: 78px;
  border-radius: 8px;
  background: rgba(255,255,255,.55);
}
.cell-active::after {
  content: "";
  position: absolute;
  left: 29px;
  top: 80px;
  width: 31px;
  height: 6px;
  border-radius: 3px;
  background: #0078d4;
}
.search {
  width: 196px;
  height: 60px;
  margin: 0 0 0 9px;
  flex: none;
  border-radius: 30px;
  background: rgba(255,255,255,.78);
  box-shadow: 0 2px 0 rgba(180,200,175,.5);
  display: flex;
  align-items: center;
  justify-content: center;
  gap: 8px;
  font-size: 24px;
  line-height: 32px;
  color: #1a1a1a;
  padding: 0 0 2px 2px;
}
.ico-text { font-family: "Liberation Sans", sans-serif; font-weight: 700; fill: #fff; text-anchor: middle; }
.bili-text { font-size: 15px; }
.iqiyi-text { font-size: 15px; font-weight: 400; }
.tray { display: flex; align-items: center; margin-left: 236px; }
.tr-chev { margin-top: -4px; }
.tr-sync { margin-left: 20px; }
.tr-ime { margin-left: 27px; }
.ime-text { font-size: 15px; text-anchor: middle; fill: #333; }
.tr-sogou { margin-left: 47px; }
.sogou-text { font-family: "Liberation Sans", sans-serif; font-weight: 700; font-style: italic; font-size: 26px; text-anchor: middle; fill: #fff; }
.tr-wifi { margin-left: 45px; }
.tr-vol { margin-left: 17px; }
.tr-bat { margin-left: 17px; }
.clock {
  width: 125px;
  margin-left: 20px;
  display: flex;
  flex-direction: column;
  align-items: flex-end;
  font-family: "Noto Sans", sans-serif;
  font-size: 22px;
  line-height: 31px;
  color: #1a1a1a;
  white-space: nowrap;
}
.badge {
  width: 32px;
  height: 32px;
  margin-left: 16px;
  border-radius: 50%;
  background: #0b78d7;
  color: #fff;
  font-family: "Noto Sans", sans-serif;
  font-size: 21px;
  line-height: 32px;
  text-align: center;
}
```
